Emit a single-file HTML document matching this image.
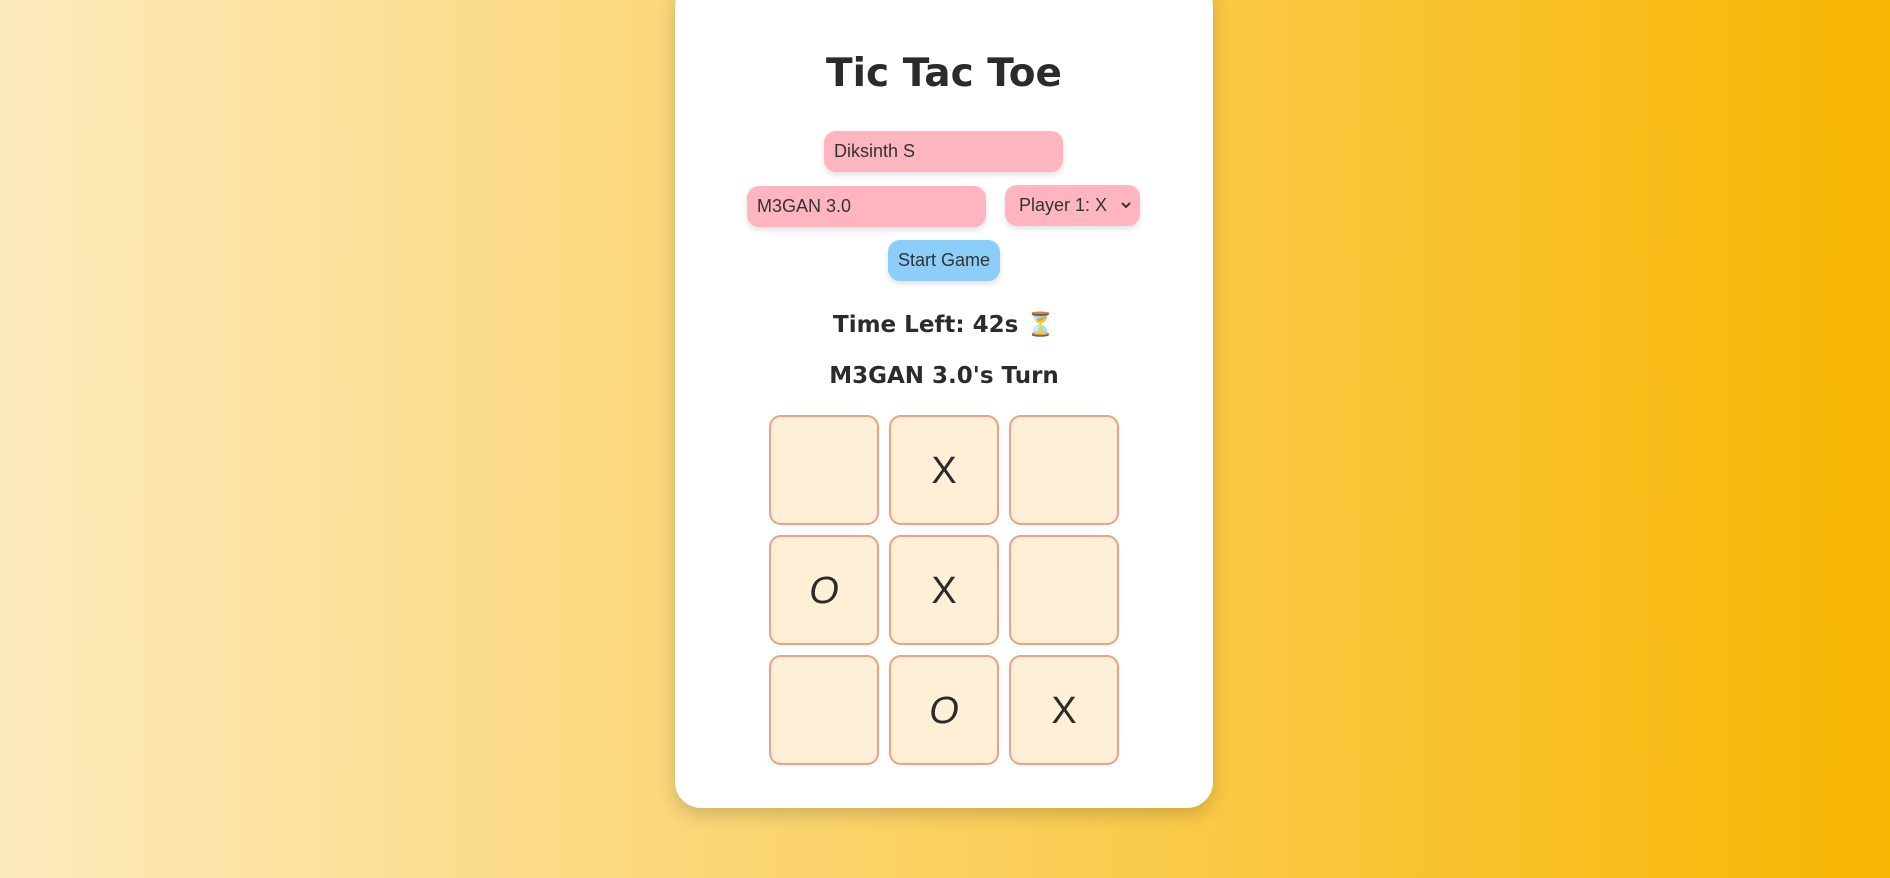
<!DOCTYPE html>
<html><head><meta charset="utf-8"><style>
*{box-sizing:border-box;margin:0;padding:0}
html,body{width:1890px;height:878px;overflow:hidden}
body{background:linear-gradient(to right,#fdeabd,#f8b602);font-family:"Comic Sans MS","DejaVu Sans","Liberation Sans",sans-serif;color:#2b2b2b;position:relative}
.card{position:absolute;left:675px;top:-20px;width:538px;height:828px;background:#fff;border-radius:26px;box-shadow:0 6px 18px rgba(0,0,0,.18)}
h1{position:absolute;left:0;width:538px;text-align:center;top:68px;font-size:39px;font-weight:bold;line-height:52px}
.inp{position:absolute;background:#ffb5c0;border-radius:12px;height:41px;font-family:"Liberation Sans",sans-serif;font-size:18px;line-height:41px;padding-left:10px;box-shadow:0 3px 6px rgba(0,0,0,.12);color:#333}
.btn{position:absolute;background:#8ccdfa;border-radius:12px;height:41px;font-family:"Liberation Sans",sans-serif;font-size:18px;line-height:41px;text-align:center;box-shadow:0 3px 6px rgba(0,0,0,.12);color:#333}
.t{position:absolute;left:0;width:538px;text-align:center;font-size:23px;font-weight:bold}
.cell{position:absolute;width:110px;height:110px;background:#ffefd6;border:2px solid #eda283;border-radius:12px;font-size:38px;text-align:center;line-height:108px;font-family:"Liberation Sans",sans-serif;font-weight:normal;color:#2b2b2b}
</style></head><body>
<div class="card">
<h1>Tic Tac Toe</h1>
<div class="inp" style="left:149px;top:151px;width:239px">Diksinth S</div>
<div class="inp" style="left:72px;top:206px;width:239px">M3GAN 3.0</div>
<div class="inp" style="left:330px;top:205px;width:135px;padding-left:14px">Player 1: X <svg style="position:absolute;right:8px;top:16px" width="12" height="9" viewBox="0 0 12 9"><path d="M2 2l4 4 4-4" fill="none" stroke="#333" stroke-width="2"/></svg></div>
<div class="btn" style="left:213px;top:260px;width:112px">Start Game</div>
<div class="t" style="top:331px">Time Left: 42s ⏳</div>
<div class="t" style="top:383px">M3GAN 3.0's Turn</div>
<div class="cell" style="left:94px;top:435px"></div>
<div class="cell" style="left:214px;top:435px">X</div>
<div class="cell" style="left:334px;top:435px"></div>
<div class="cell" style="left:94px;top:555px"><i>O</i></div>
<div class="cell" style="left:214px;top:555px">X</div>
<div class="cell" style="left:334px;top:555px"></div>
<div class="cell" style="left:94px;top:675px"></div>
<div class="cell" style="left:214px;top:675px"><i>O</i></div>
<div class="cell" style="left:334px;top:675px">X</div>
</div>
</body></html>
